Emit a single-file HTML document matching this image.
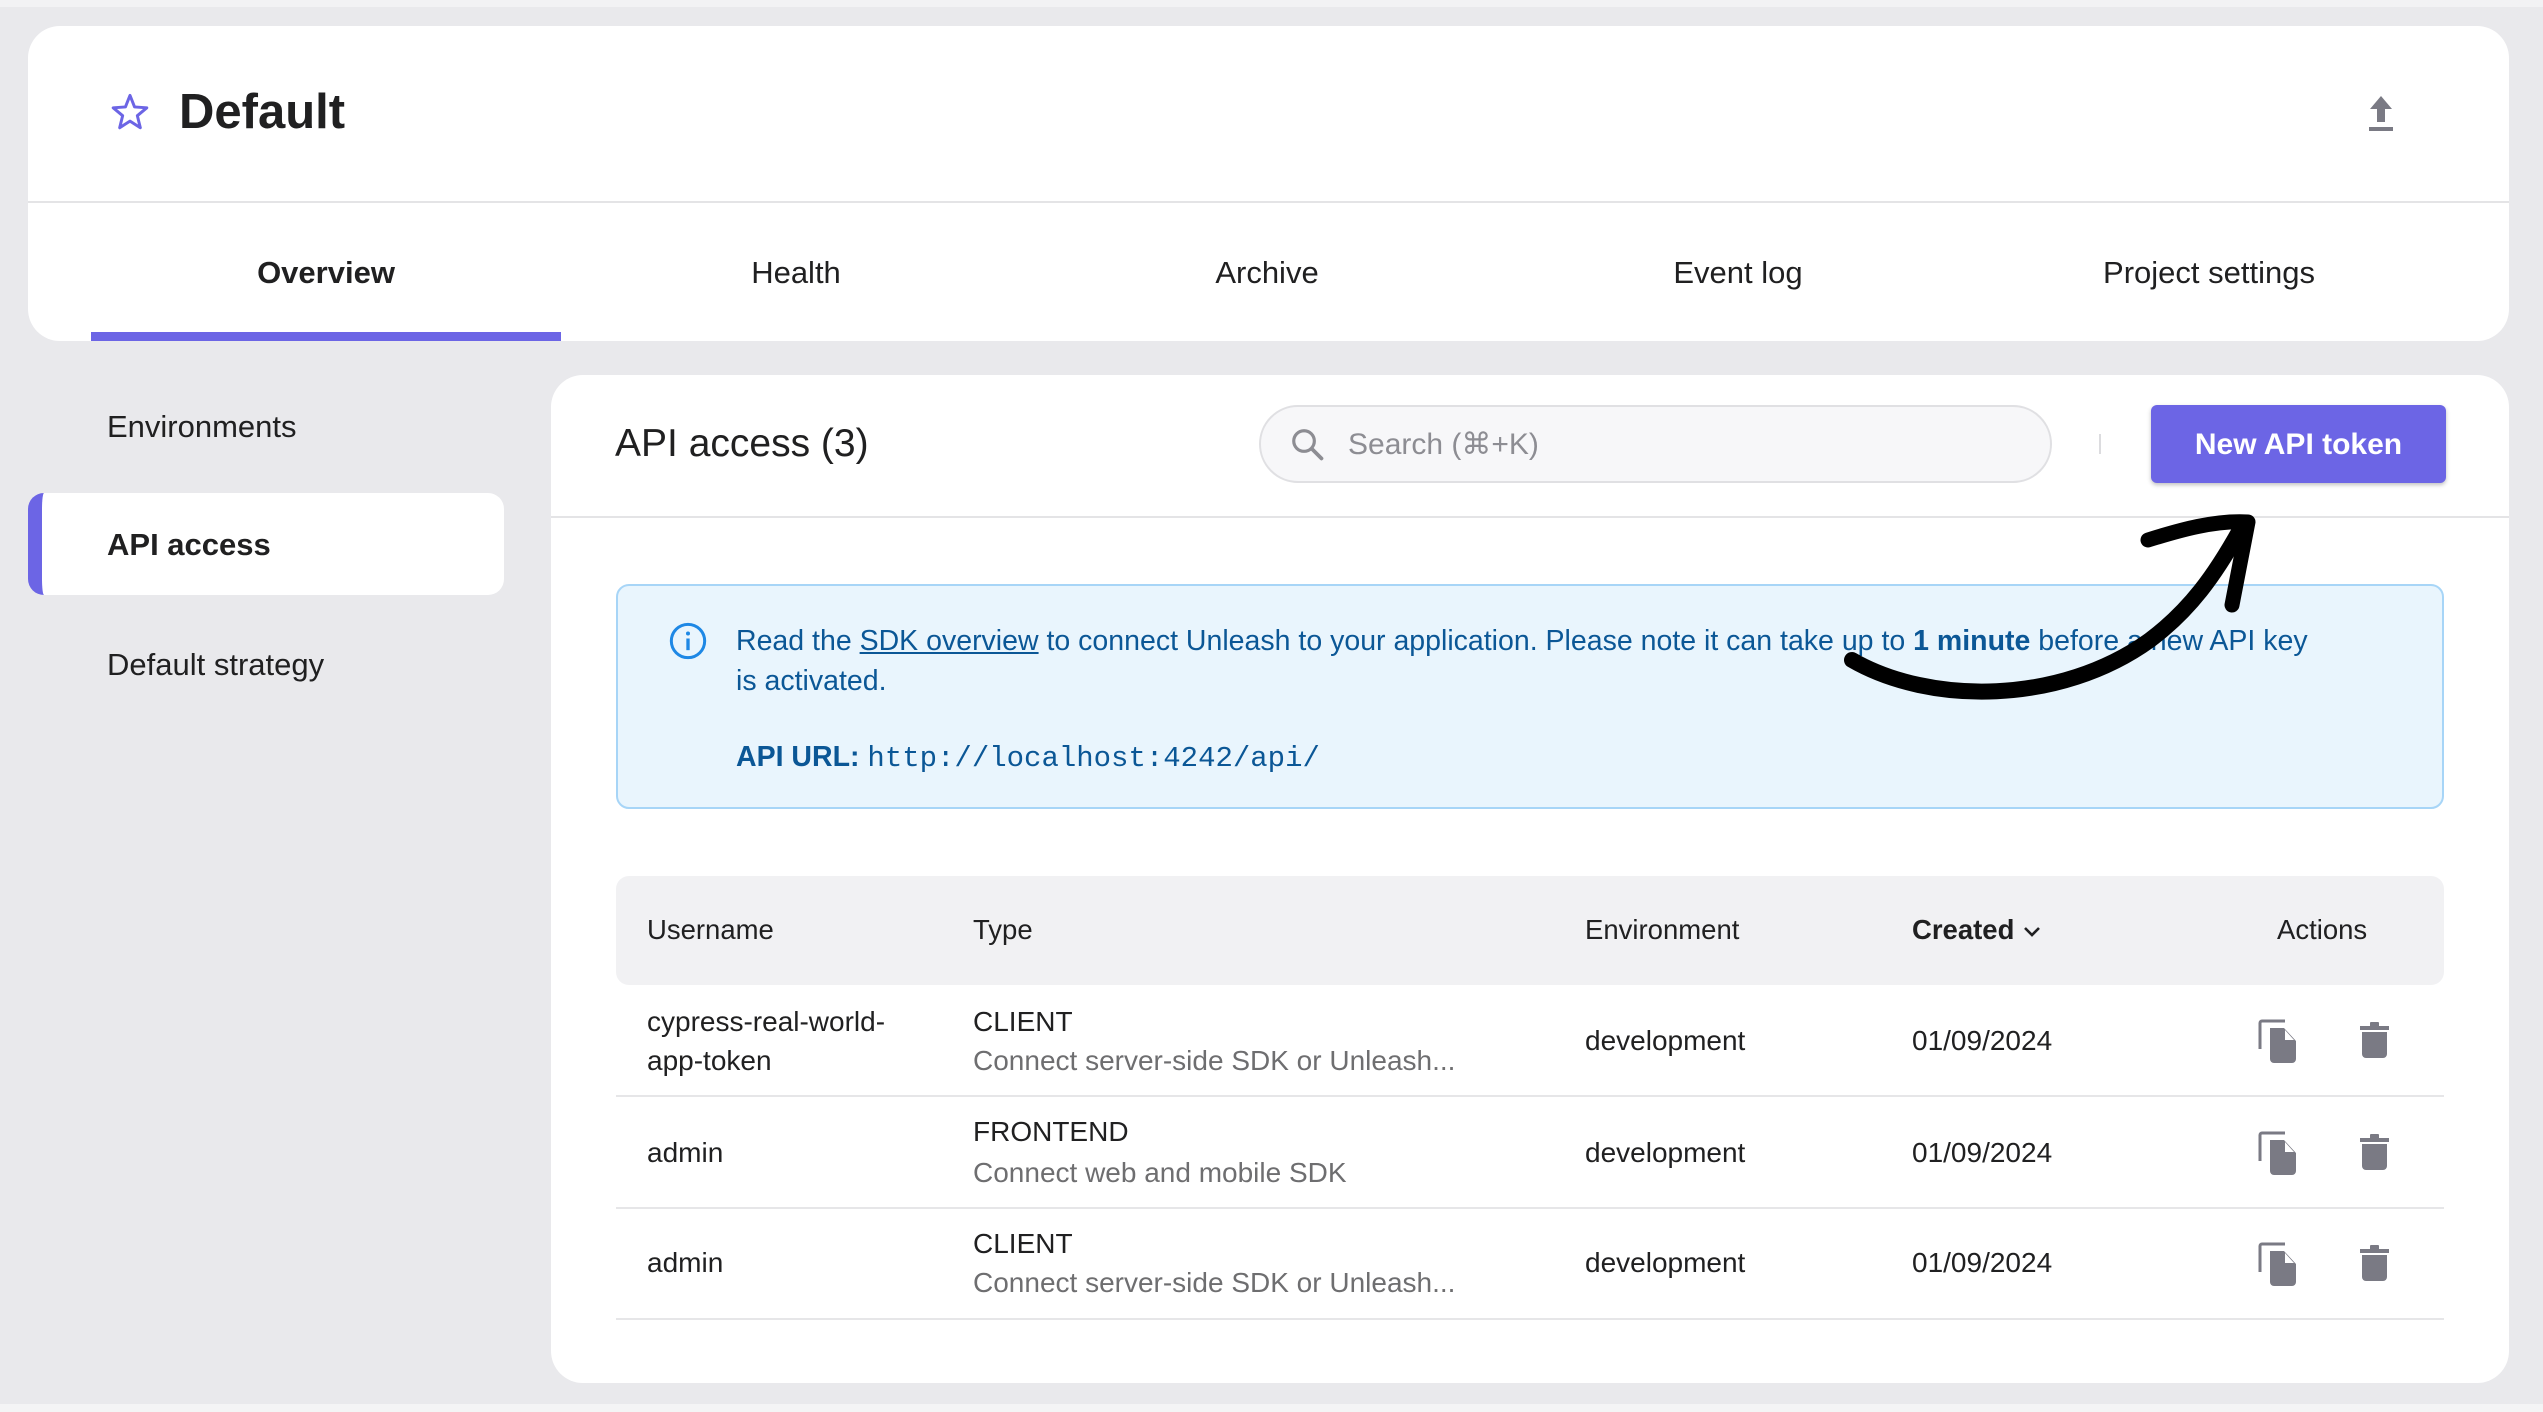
<!DOCTYPE html>
<html><head><meta charset="utf-8"><style>
*{box-sizing:border-box;margin:0;padding:0}
body{width:2543px;height:1412px;background:#e9e9ec;font-family:"Liberation Sans",sans-serif;color:#202021;position:relative;overflow:hidden}
.a{position:absolute;white-space:nowrap}
.card{position:absolute;background:#fff;border-radius:32px}
.tab{position:absolute;top:255px;width:470px;text-align:center;font-size:31px}
.th{position:absolute;top:914px;font-size:27.5px}
.c{position:absolute;font-size:28px}
.sub{color:#6e6e70}
.row{position:absolute;left:616px;width:1828px;height:0;border-top:2px solid #e6e6e8}
</style></head><body>
<div class="a" style="left:0;top:0;width:2543px;height:7px;background:#f2f2f4"></div>
<div class="card" style="left:28px;top:26px;width:2481px;height:315px"></div>
<svg class="a" style="left:109px;top:91px" width="42" height="42" viewBox="0 0 24 24"><path d="M12 2.5l2.6 6.6 7 .5-5.4 4.5 1.7 6.9L12 17.2 6.1 21l1.7-6.9-5.4-4.5 7-.5z" fill="none" stroke="#6c65e5" stroke-width="1.7" stroke-linejoin="round"/></svg>
<div class="a" style="left:179px;top:84px;font-size:49px;font-weight:bold">Default</div>
<svg class="a" style="left:2366px;top:94px" width="30" height="38" viewBox="0 0 30 38"><path d="M15 2L4 15h7v13h8V15h7z" fill="#7a7a84"/><rect x="3" y="33" width="24" height="4" fill="#7a7a84"/></svg>
<div class="a" style="left:28px;top:201px;width:2481px;height:2px;background:#e4e4e6"></div>
<div class="tab" style="left:91px;font-weight:bold">Overview</div>
<div class="tab" style="left:561px">Health</div>
<div class="tab" style="left:1032px">Archive</div>
<div class="tab" style="left:1503px">Event log</div>
<div class="tab" style="left:1974px">Project settings</div>
<div class="a" style="left:91px;top:332px;width:470px;height:9px;background:#6c65e5"></div>

<div class="a" style="left:107px;top:409px;font-size:31px">Environments</div>
<div class="a" style="left:28px;top:493px;width:476px;height:102px;background:#fff;border-radius:16px;border-left:14px solid #6c65e5"></div>
<div class="a" style="left:107px;top:527px;font-size:31px;font-weight:bold">API access</div>
<div class="a" style="left:107px;top:647px;font-size:31px">Default strategy</div>

<div class="card" style="left:551px;top:375px;width:1958px;height:1008px"></div>
<div class="a" style="left:615px;top:422px;font-size:39px">API access (3)</div>
<div class="a" style="left:1259px;top:405px;width:793px;height:78px;border:2px solid #e0e0e3;background:#f7f7f9;border-radius:39px"></div>
<svg class="a" style="left:1289px;top:426px" width="38" height="38" viewBox="0 0 24 24"><circle cx="9.5" cy="9.5" r="6.5" fill="none" stroke="#8d8d93" stroke-width="2"/><path d="M14.5 14.5l6 6" stroke="#8d8d93" stroke-width="2.4" stroke-linecap="round"/></svg>
<div class="a" style="left:1348px;top:427px;font-size:30px;color:#8d8d93">Search (⌘+K)</div>
<div class="a" style="left:2099px;top:434px;width:2px;height:20px;background:#dcdcdf"></div>
<div class="a" style="left:2151px;top:405px;width:295px;height:78px;background:#6c65e5;border-radius:6px;box-shadow:0 2px 4px rgba(0,0,0,.25);color:#fff;font-weight:bold;font-size:30px;text-align:center;line-height:80px">New API token</div>
<div class="a" style="left:551px;top:516px;width:1958px;height:2px;background:#e4e4e6"></div>

<div class="a" style="left:616px;top:584px;width:1828px;height:225px;background:#e9f5fd;border:2px solid #a7d5f7;border-radius:13px"></div>
<svg class="a" style="left:668px;top:621px" width="40" height="40" viewBox="0 0 24 24"><circle cx="12" cy="12" r="10" fill="none" stroke="#1e88e5" stroke-width="1.8"/><rect x="11" y="10.5" width="2" height="7" fill="#1e88e5"/><circle cx="12" cy="7.5" r="1.2" fill="#1e88e5"/></svg>
<div class="a" style="left:736px;top:625px;font-size:28.5px;color:#0b5796">Read the <u>SDK overview</u> to connect Unleash to your application. Please note it can take up to <b>1 minute</b> before a new API key</div>
<div class="a" style="left:736px;top:665px;font-size:28.5px;color:#0b5796">is activated.</div>
<div class="a" style="left:736px;top:741px;font-size:28.5px;color:#0b5796"><b>API URL:</b> <span style="font-family:'Liberation Mono',monospace;font-size:29px">http://localhost:4242/api/</span></div>

<svg class="a" style="left:0;top:0" width="2543" height="1412"><path d="M1852 660 C1930 705 2060 705 2150 640 C2190 610 2215 575 2240 530" fill="none" stroke="#000" stroke-width="16" stroke-linecap="round"/><path d="M2148 540 C2180 530 2215 520 2248 522 L2232 605" fill="none" stroke="#000" stroke-width="15" stroke-linecap="round" stroke-linejoin="round"/></svg>

<div class="a" style="left:616px;top:876px;width:1828px;height:109px;background:#f1f1f3;border-radius:13px"></div>
<div class="th" style="left:647px">Username</div>
<div class="th" style="left:973px">Type</div>
<div class="th" style="left:1585px">Environment</div>
<div class="th" style="left:1912px;font-weight:bold">Created <svg width="20" height="14" viewBox="0 0 20 14"><path d="M3 3l7 7 7-7" fill="none" stroke="#202021" stroke-width="2.6"/></svg></div>
<div class="th" style="left:2277px">Actions</div>

<div class="row" style="top:1095px"></div>
<div class="row" style="top:1207px"></div>
<div class="row" style="top:1318px"></div>

<div class="c" style="left:647px;top:1006px">cypress-real-world-</div>
<div class="c" style="left:647px;top:1045px">app-token</div>
<div class="c" style="left:973px;top:1006px">CLIENT</div>
<div class="c sub" style="left:973px;top:1045px">Connect server-side SDK or Unleash...</div>
<div class="c" style="left:1585px;top:1025px">development</div>
<div class="c" style="left:1912px;top:1025px">01/09/2024</div>

<div class="c" style="left:647px;top:1137px">admin</div>
<div class="c" style="left:973px;top:1116px">FRONTEND</div>
<div class="c sub" style="left:973px;top:1157px">Connect web and mobile SDK</div>
<div class="c" style="left:1585px;top:1137px">development</div>
<div class="c" style="left:1912px;top:1137px">01/09/2024</div>

<div class="c" style="left:647px;top:1247px">admin</div>
<div class="c" style="left:973px;top:1228px">CLIENT</div>
<div class="c sub" style="left:973px;top:1267px">Connect server-side SDK or Unleash...</div>
<div class="c" style="left:1585px;top:1247px">development</div>
<div class="c" style="left:1912px;top:1247px">01/09/2024</div>

<svg width="0" height="0" style="position:absolute"><defs>
<g id="cp"><path d="M2 30V4a2 2 0 0 1 2-2h23" fill="none" stroke="#7a7a84" stroke-width="3"/><path d="M12 9h14l12 13v18a4 4 0 0 1-4 4H16a4 4 0 0 1-4-4z" fill="#7a7a84"/><path d="M27 11l9 10h-9z" fill="#fff"/></g>
<g id="tr"><rect x="0" y="4" width="29" height="4" fill="#7a7a84"/><rect x="10" y="0" width="9" height="5" rx="1" fill="#7a7a84"/><path d="M2 10h25v22a4 4 0 0 1-4 4H6a4 4 0 0 1-4-4z" fill="#7a7a84"/></g>
</defs></svg>
<svg class="a" style="left:2258px;top:1019px" width="40" height="46"><use href="#cp"/></svg>
<svg class="a" style="left:2360px;top:1022px" width="30" height="38"><use href="#tr"/></svg>
<svg class="a" style="left:2258px;top:1131px" width="40" height="46"><use href="#cp"/></svg>
<svg class="a" style="left:2360px;top:1134px" width="30" height="38"><use href="#tr"/></svg>
<svg class="a" style="left:2258px;top:1242px" width="40" height="46"><use href="#cp"/></svg>
<svg class="a" style="left:2360px;top:1245px" width="30" height="38"><use href="#tr"/></svg>

<div class="a" style="left:0;top:1404px;width:2543px;height:8px;background:#f4f4f5"></div>
</body></html>
